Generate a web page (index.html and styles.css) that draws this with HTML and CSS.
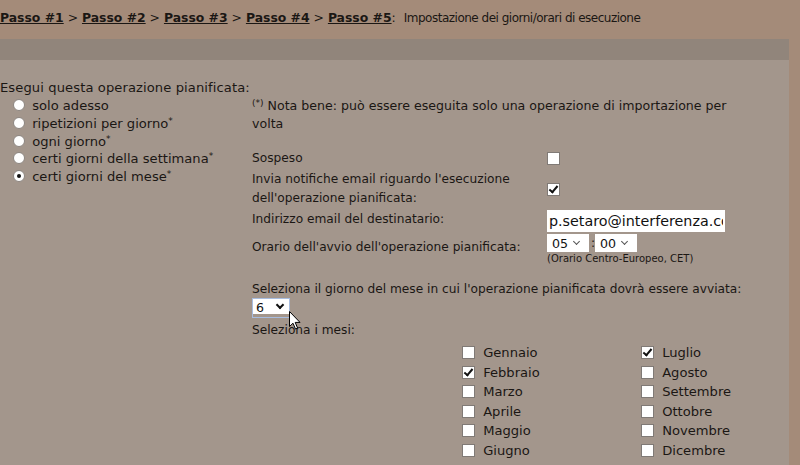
FILE: index.html
```html
<!DOCTYPE html>
<html lang="it">
<head>
  <meta charset="UTF-8" />
  <title>Pianificazione - Passo #5</title>
  <link rel="stylesheet" href="styles.css">
</head>
<body>
  <div class="steps">
    <a href="#">Passo #1</a> &gt; <a href="#">Passo #2</a> &gt; <a href="#">Passo #3</a>
    &gt; <a href="#">Passo #4</a> &gt; <a href="#">Passo #5</a>:<span class="title">Impostazione dei giorni/orari di esecuzione</span>
  </div>

  <div class="band"></div>

  <div class="panel">
    <div class="intro">Esegui questa operazione pianificata:</div>

    <div class="columns">
      <div class="modes">
        <label><input type="radio" name="mode"> solo adesso</label>
        <label><input type="radio" name="mode"> ripetizioni per giorno<span class="star">*</span></label>
        <label><input type="radio" name="mode"> ogni giorno<span class="star">*</span></label>
        <label><input type="radio" name="mode"> certi giorni della settimana<span class="star">*</span></label>
        <label><input type="radio" name="mode" checked> certi giorni del mese<span class="star">*</span></label>
      </div>

      <div class="options">
        <p class="note"><span class="star">(*)</span> Nota bene: può essere eseguita solo una operazione di importazione per volta</p>

        <div class="form">
          <div class="lbl">Sospeso</div>
          <div class="val"><input type="checkbox"></div>

          <div class="lbl">Invia notifiche email riguardo l'esecuzione dell'operazione pianificata:</div>
          <div class="val"><input type="checkbox" checked></div>

          <div class="lbl">Indirizzo email del destinatario:</div>
          <div class="val"><input type="text" class="email" value="p.setaro@interferenza.com"></div>

          <div class="lbl lbl-time">Orario dell'avvio dell'operazione pianificata:</div>
          <div class="val">
            <span class="sel"><select><option>05</option></select></span>:<span class="sel"><select><option>00</option></select></span>
            <div class="tz">(Orario Centro-Europeo, CET)</div>
          </div>
        </div>

        <div class="day">
          <div>Seleziona il giorno del mese in cui l'operazione pianificata dovrà essere avviata:</div>
          <span class="sel sel-day"><select><option>6</option></select></span>
          <svg class="cursor" width="12" height="19" viewBox="0 0 12 19">
            <path d="M0.5 0.5 L0.5 15.5 L4 12.2 L6.5 18 L8.6 17.1 L6.2 11.4 L11 11.4 Z" fill="#fff" stroke="#000" stroke-width="1"/>
          </svg>
        </div>

        <div class="months-title">Seleziona i mesi:</div>
        <div class="months">
          <label><input type="checkbox"> Gennaio</label>
          <label><input type="checkbox" checked> Luglio</label>
          <label><input type="checkbox" checked> Febbraio</label>
          <label><input type="checkbox"> Agosto</label>
          <label><input type="checkbox"> Marzo</label>
          <label><input type="checkbox"> Settembre</label>
          <label><input type="checkbox"> Aprile</label>
          <label><input type="checkbox"> Ottobre</label>
          <label><input type="checkbox"> Maggio</label>
          <label><input type="checkbox"> Novembre</label>
          <label><input type="checkbox"> Giugno</label>
          <label><input type="checkbox"> Dicembre</label>
        </div>
      </div>
    </div>
  </div>
</body>
</html>
```

FILE: styles.css
```css
body {
  margin: 0;
  background: #a48b79;
  font-family: "DejaVu Sans", Verdana, sans-serif;
  font-size: 12.2px;
  color: #1b1714;
  height: 465px;
  overflow: hidden;
}
.steps {
  height: 39px;
  line-height: 36px;
  font-size: 12.4px;
  white-space: nowrap;
}
.steps a {
  color: #1b1714;
  font-weight: bold;
}
.steps .title {
  margin-left: 8px;
  font-size: 12px;
  letter-spacing: -0.5px;
}
.band {
  height: 21px;
  margin-right: 11px;
  background: #91857b;
}
.panel {
  margin-right: 11px;
  background: #a3968c;
  height: 405px;
  padding-top: 19px;
  box-sizing: border-box;
}
.intro {
  line-height: 18px;
  font-size: 13.1px;
  letter-spacing: 0.1px;
}
.columns {
  display: flex;
}
.modes {
  flex-shrink: 0;
  width: 238px;
  padding-left: 13px;
  display: flex;
  flex-direction: column;
  font-size: 13.1px;
}
.modes label {
  line-height: 17.8px;
  white-space: nowrap;
}
.star {
  font-size: 9px;
  line-height: 1;
  position: relative;
  top: -4px;
}
input[type=radio] {
  appearance: none;
  width: 12px;
  height: 12px;
  margin: 0 3px 0 0;
  border: 1px solid #8c8580;
  border-radius: 50%;
  background: #fff;
  vertical-align: -1px;
  position: relative;
}
input[type=radio]:checked::after {
  content: "";
  position: absolute;
  left: 3px;
  top: 3px;
  width: 4px;
  height: 4px;
  border-radius: 50%;
  background: #111;
}
input[type=checkbox] {
  appearance: none;
  width: 13px;
  height: 13px;
  margin: 0;
  border: 1px solid #807a76;
  background: #fff;
  position: relative;
  vertical-align: -2px;
}
input[type=checkbox]:checked::after {
  content: "";
  position: absolute;
  left: 3px;
  top: 0px;
  width: 3px;
  height: 7px;
  border: solid #111;
  border-width: 0 2px 2px 0;
  transform: rotate(40deg);
}
.options {
  width: 510px;
}
.note {
  margin: 0 0 16px 1px;
  line-height: 18px;
  font-size: 12.6px;
}
.form {
  display: grid;
  grid-template-columns: 295px 1fr;
  row-gap: 2px;
  padding-left: 1px;
}
.lbl {
  line-height: 19px;
  width: 280px;
}
.val {
  display: flex;
  flex-wrap: wrap;
  align-items: center;
  align-content: center;
}
.email {
  width: 178px;
  height: 22px;
  box-sizing: border-box;
  border: none;
  padding: 0 2px;
  font: inherit;
  font-size: 14.3px;
  color: #111;
}
.lbl-time {
  padding-top: 4px;
}
.val .sel {
  margin-right: 2px;
}
.sel {
  position: relative;
  display: inline-block;
}
.sel select {
  appearance: none;
  width: 42px;
  height: 18px;
  border: none;
  padding: 0 0 0 5px;
  background: #fff;
  font: inherit;
  font-size: 12.6px;
  color: #111;
}
.sel::after {
  content: "";
  position: absolute;
  right: 10px;
  top: 5px;
  width: 4px;
  height: 4px;
  border: solid #555;
  border-width: 0 1px 1px 0;
  transform: rotate(45deg);
  pointer-events: none;
}
.tz {
  width: 100%;
  font-size: 10px;
  line-height: 12px;
  margin-top: 1px;
}
.day {
  position: relative;
  margin-top: 16px;
  padding-left: 1px;
  line-height: 17px;
}
.sel-day {
  border: 1px solid #a8bde0;
}
.sel-day select {
  width: 36px;
  height: 15px;
  padding-left: 3px;
}
.sel-day::after {
  right: 6px;
  top: 3px;
  width: 4px;
  height: 4px;
  border-color: #111;
  border-width: 0 2px 2px 0;
}
.cursor {
  position: absolute;
  left: 38px;
  top: 30px;
}
.months-title {
  padding-left: 1px;
  line-height: 20px;
  margin-top: 2px;
}
.months {
  display: grid;
  grid-template-columns: 179px 179px;
  margin-left: 211px;
  margin-top: 3px;
  font-size: 13.1px;
}
.months label {
  line-height: 19.6px;
  white-space: nowrap;
}
.months input {
  margin-right: 4px;
}
```
